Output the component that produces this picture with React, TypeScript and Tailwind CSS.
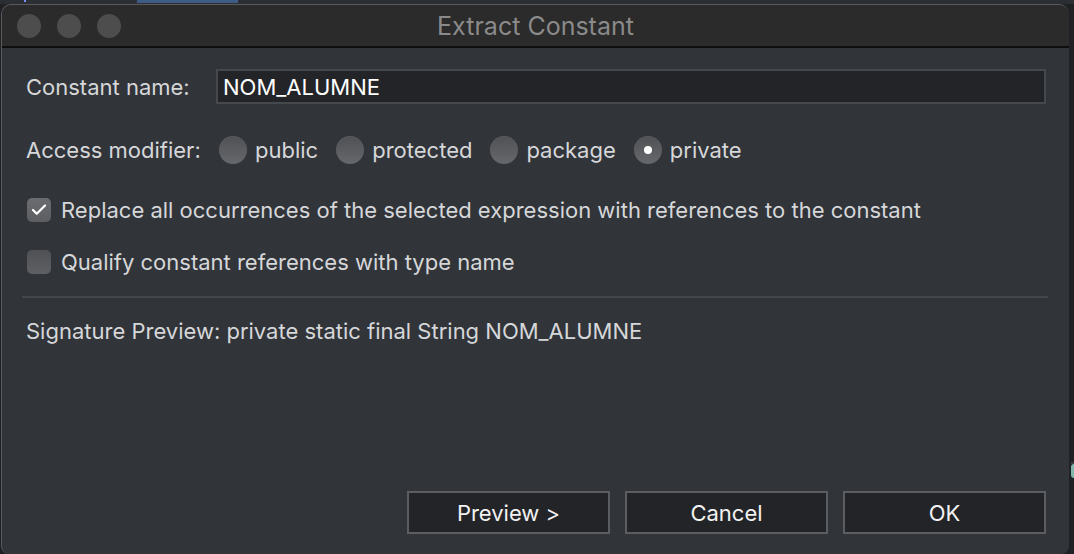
import { Check } from "lucide-react";

const font = { fontFamily: "Inter, 'Noto Sans', 'Liberation Sans', sans-serif" };

function Radio({ label, selected }: { label: string; selected?: boolean }) {
  return (
    <div className="flex items-center gap-2">
      <span className="flex h-[28px] w-[28px] items-center justify-center rounded-full bg-gradient-to-b from-[#4f5154] to-[#66686b] shadow-[inset_0_1px_0_rgba(255,255,255,0.06)]">
        {selected && <span className="h-[8px] w-[8px] rounded-full bg-white" />}
      </span>
      <span className="text-[22px] leading-6 text-[#d6d7d9]">{label}</span>
    </div>
  );
}

function CheckRow({ label, checked }: { label: string; checked?: boolean }) {
  return (
    <div className="flex items-center gap-[10px] pl-[1px]">
      <span
        className={`flex h-[24px] w-[24px] items-center justify-center rounded-[5px] ${
          checked ? "bg-gradient-to-b from-[#6a6c70] to-[#5c5e62]" : "bg-gradient-to-b from-[#4f5154] to-[#5e6064]"
        }`}
      >
        {checked && <Check size={18} strokeWidth={3} className="text-white" />}
      </span>
      <span className="text-[22px] leading-6 text-[#d6d7d9]">{label}</span>
    </div>
  );
}

function DialogButton({ label }: { label: string }) {
  return (
    <button
      type="button"
      className="flex h-[43px] w-[203px] items-center justify-center border-2 border-[#5b5d61] bg-[#232427] text-[22px] leading-6 text-[#f2f2f2]"
    >
      {label}
    </button>
  );
}

export default function App() {
  return (
    <div className="h-[554px] w-[1074px] overflow-hidden bg-[#1f2124]" style={font}>
      <div className="relative h-[4px] bg-[#2b2e33]">
        <span className="absolute left-[137px] top-0 h-[3px] w-[101px] bg-[#3e5b85]" />
        <span className="absolute left-[24px] top-0 h-[2px] w-[2px] bg-[#7a8cff]" />
      </div>
      <div className="flex">
        <div className="ml-[1px] flex h-[550px] w-[1068px] flex-col overflow-hidden rounded-t-[10px] rounded-b-[8px] border-l border-t border-[#5a5a5c] bg-[#313439]">
          <div className="relative flex h-[43px] shrink-0 items-center border-b-2 border-[#0e0e0e] bg-[#2b2b2b]">
            <div className="flex gap-[16px] pl-[15px]">
              <span className="h-[24px] w-[24px] rounded-full bg-[#4d4d4d]" />
              <span className="h-[24px] w-[24px] rounded-full bg-[#4d4d4d]" />
              <span className="h-[24px] w-[24px] rounded-full bg-[#4d4d4d]" />
            </div>
            <span className="absolute inset-x-0 text-center text-[25px] leading-8 text-[#8a8a8a]">
              Extract Constant
            </span>
          </div>

          <div className="flex flex-1 flex-col pl-[24px] pr-[23px] pt-[21px] pb-[20px]">
            <div className="flex items-center">
              <span className="w-[190px] text-[22px] leading-6 text-[#d6d7d9]">Constant name:</span>
              <div className="flex h-[35px] flex-1 items-center border-2 border-[#45484c] bg-[#232427] px-[5px] text-[22px] leading-6 text-white">
                NOM_ALUMNE
              </div>
            </div>

            <div className="mt-[32px] flex items-center">
              <span className="w-[193px] text-[22px] leading-6 text-[#d6d7d9]">Access modifier:</span>
              <div className="flex items-center gap-[18px]">
                <Radio label="public" />
                <Radio label="protected" />
                <Radio label="package" />
                <Radio label="private" selected />
              </div>
            </div>

            <div className="mt-[34px]">
              <CheckRow
                checked
                label="Replace all occurrences of the selected expression with references to the constant"
              />
            </div>
            <div className="mt-[28px]">
              <CheckRow label="Qualify constant references with type name" />
            </div>

            <div className="ml-[-4px] mr-[-2px] mt-[22px] h-[2px] bg-[#43464b]" />

            <p className="mt-[21px] text-[22px] leading-6 text-[#d6d7d9]">
              Signature Preview: private static final String NOM_ALUMNE
            </p>

            <div className="mt-auto flex justify-end gap-[15px]">
              <DialogButton label="Preview >" />
              <DialogButton label="Cancel" />
              <DialogButton label="OK" />
            </div>
          </div>
        </div>
        <div className="relative flex-1">
          <span className="absolute left-[2px] top-[458px] h-[2px] w-[4px] bg-[#3a3d42]" />
          <span className="absolute left-[2px] top-[460px] h-[14px] w-[6px] rounded-full bg-[#7fb7ad]" />
        </div>
      </div>
    </div>
  );
}
